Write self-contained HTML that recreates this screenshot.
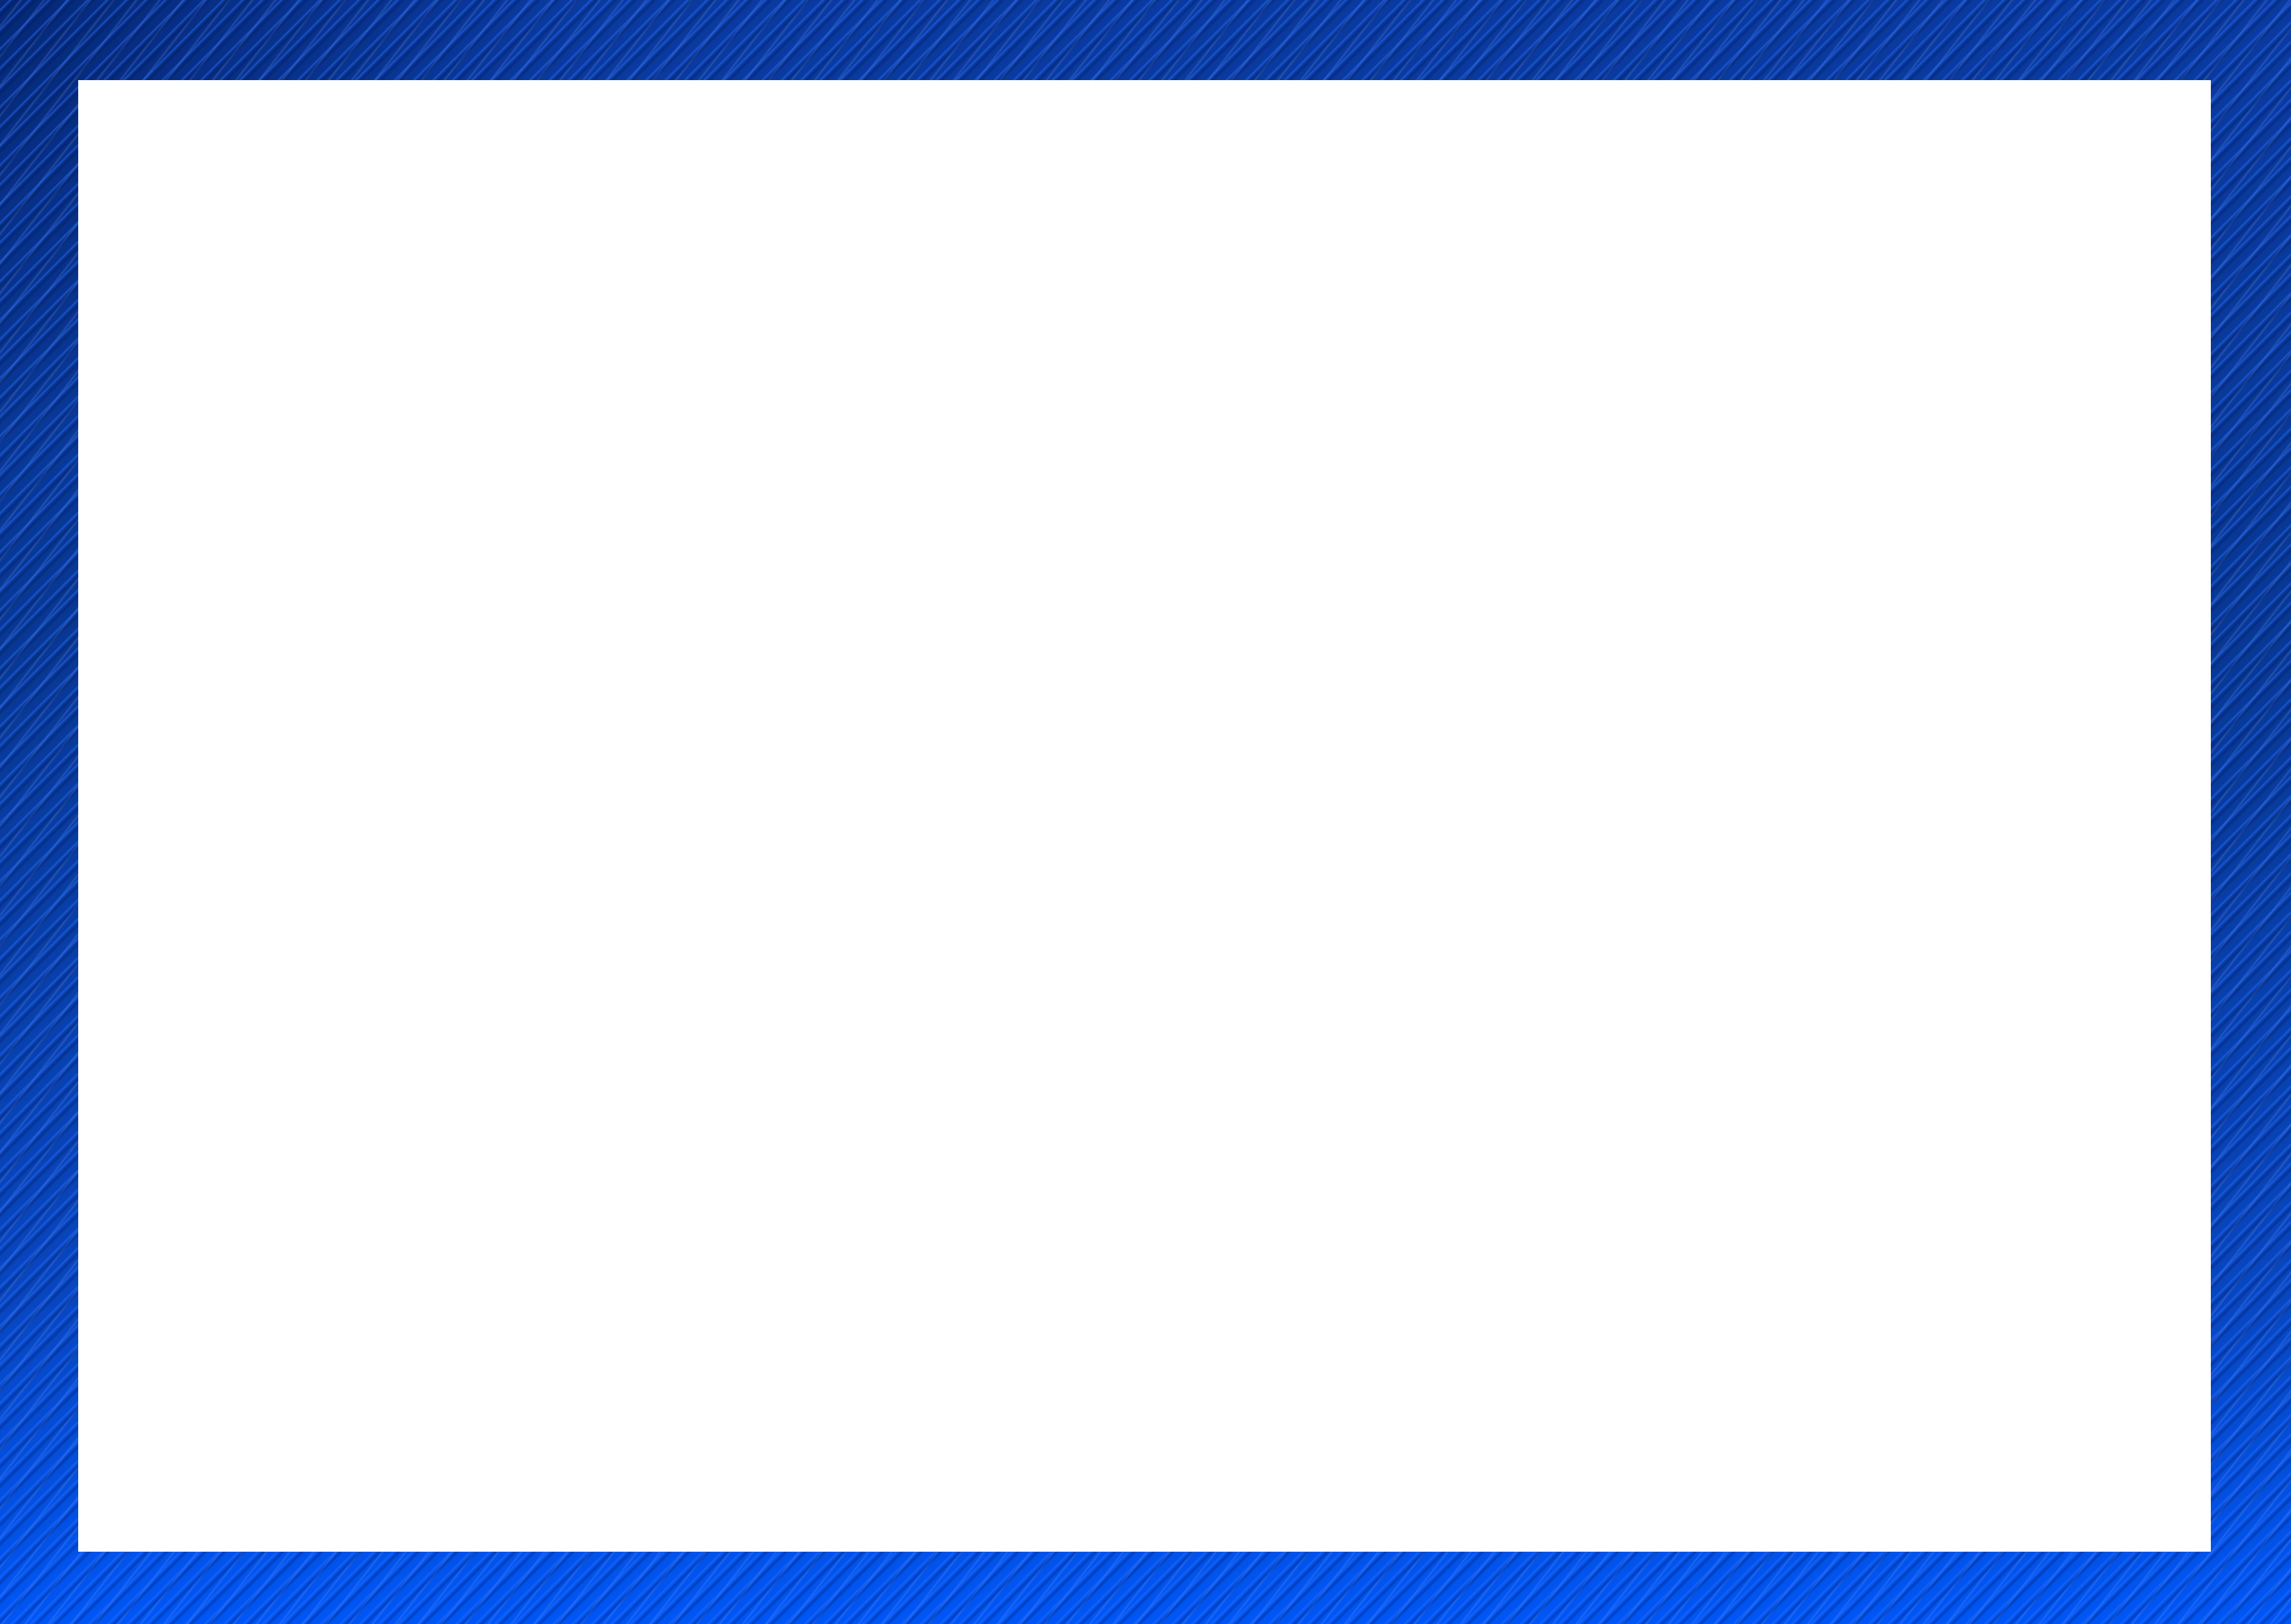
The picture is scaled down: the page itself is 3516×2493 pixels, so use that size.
<!DOCTYPE html>
<html><head><meta charset="utf-8"><style>
html,body{margin:0;padding:0;}
body{width:3516px;height:2493px;position:relative;overflow:hidden;
background:
repeating-linear-gradient(135deg, rgba(255,255,255,0) 0px, rgba(255,255,255,0) 9px, rgba(40,110,255,0.55) 11px, rgba(255,255,255,0) 14px, rgba(0,20,80,0.35) 17px, rgba(255,255,255,0) 21px),
repeating-linear-gradient(128deg, rgba(255,255,255,0) 0px, rgba(255,255,255,0) 23px, rgba(120,160,255,0.25) 25px, rgba(255,255,255,0) 28px),
radial-gradient(ellipse 900px 700px at 0% 0%, rgba(0,20,70,0.45), rgba(0,20,70,0)),
linear-gradient(180deg,#0a3aa0 0%,#083894 40%,#0846c0 80%,#0056f5 100%);}
.w{position:absolute;left:120px;top:123px;width:3273px;height:2259px;background:#fff;}
</style></head><body><div class="w"></div></body></html>
